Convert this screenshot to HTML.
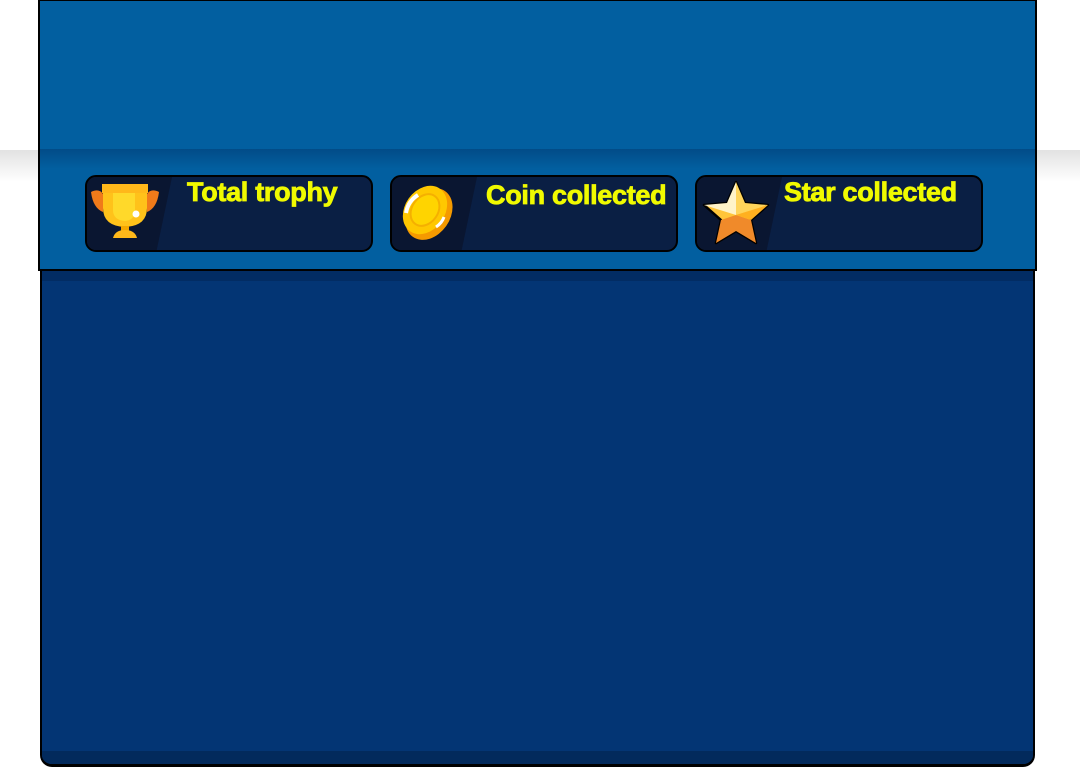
<!DOCTYPE html>
<html><head><style>
*{margin:0;padding:0;box-sizing:border-box}
body{width:1080px;height:767px;background:#fff;position:relative;overflow:hidden;font-family:"Liberation Sans",sans-serif}
.band{position:absolute;left:0;right:0;top:150px;height:32px;background:linear-gradient(#e2e2e2,#fff)}
.body{position:absolute;left:40px;top:262px;width:995px;height:505px;background:#033574;border:2px solid #000;border-bottom-width:3px;border-top:none;border-radius:0 0 12px 12px;overflow:hidden}
.body .t{position:absolute;left:0;right:0;top:0;height:19px;background:#022c63}
.body .b{position:absolute;left:0;right:0;bottom:0;height:13px;background:#022a5c}
.head{position:absolute;left:38px;top:0;width:999px;height:271px;background:#025fa0;border:2px solid #000;border-top:1px solid #000}
.head .sh{position:absolute;left:0;right:0;top:148px;height:20px;background:linear-gradient(rgba(0,40,90,.35),rgba(0,40,90,0))}
.card{position:absolute;top:175px;width:288px;height:77px;border:2px solid #000;border-radius:11px;background:#0a1f44;overflow:hidden}
.card .ic{position:absolute;left:0;top:0;bottom:0;width:85px;background:#0a1631;clip-path:polygon(0 0,100% 0,82% 100%,0 100%)}
.card .tx{position:absolute;top:0px;color:#f0fa00;font-weight:bold;font-size:27px;letter-spacing:-0.3px;-webkit-text-stroke:0.8px #f0fa00;white-space:nowrap}
.card svg{position:absolute}
</style></head><body>
<div class="band"></div>
<div class="body"><div class="t"></div><div class="b"></div></div>
<div class="head"><div class="sh"></div></div>

<div class="card" style="left:85px">
 <div class="ic"></div>
 <svg style="left:2px;top:5px" width="72" height="60" viewBox="0 0 72 60">
  <path d="M2 10 Q10 6 14 12 L14 30 Q4 26 2 10Z" fill="#f07a1a"/>
  <path d="M70 10 Q62 6 58 12 L58 30 Q68 26 70 10Z" fill="#f07a1a"/>
  <rect x="13" y="2" width="46" height="9" fill="#ffb81a"/>
  <path d="M14 11 H58 V26 Q58 44 36 45 Q14 44 14 26Z" fill="#ffc21a"/>
  <path d="M24 11 H46 V28 Q46 38 36 39 Q24 38 24 28Z" fill="#ffd92a"/>
  <circle cx="47" cy="32" r="3.5" fill="#fff"/>
  <rect x="32" y="44" width="8" height="6" fill="#f5a800"/>
  <path d="M24 56 Q26 48 36 48 Q46 48 48 56Z" fill="#ffb81a"/>
 </svg>
 <div class="tx" style="left:100px">Total trophy</div>
</div>

<div class="card" style="left:390px">
 <div class="ic"></div>
 <svg style="left:6px;top:6px" width="60" height="60" viewBox="0 0 60 60">
  <ellipse cx="31" cy="31" rx="21" ry="28" transform="rotate(35 31 31)" fill="#f59a00"/>
  <ellipse cx="27" cy="27" rx="20" ry="26" transform="rotate(35 27 27)" fill="#ffc800"/>
  <ellipse cx="27" cy="27" rx="13" ry="17" transform="rotate(35 27 27)" fill="#ffd400" stroke="#f5b000" stroke-width="2"/>
  <path d="M8 30 Q10 18 20 12" stroke="#fff" stroke-width="4" fill="none"/>
  <path d="M38 44 Q44 40 46 34" stroke="#fff" stroke-width="3" fill="none"/>
 </svg>
 <div class="tx" style="left:94px;top:3px">Coin collected</div>
</div>

<div class="card" style="left:695px">
 <div class="ic"></div>
 <svg style="left:3px;top:2px" width="72" height="68" viewBox="0 0 72 68">
  <path d="M36 3 L45 24 L68 26 L51 41 L56 64 L36 52 L16 64 L21 41 L4 26 L27 24Z" fill="#ffc53a" stroke="#000" stroke-width="2.5" stroke-linejoin="round"/>
  <path d="M36 3 L27 24 L4 26 L36 36Z" fill="#fff3c8"/>
  <path d="M36 36 L68 26 L45 24 L36 3Z" fill="#ffd45a"/>
  <path d="M36 36 L51 41 L56 64 L36 52 L16 64 L21 41Z" fill="#f08a2a"/>
  <path d="M36 36 L51 41 L68 26Z" fill="#ffb020"/>
 </svg>
 <div class="tx" style="left:87px">Star collected</div>
</div>
</body></html>
